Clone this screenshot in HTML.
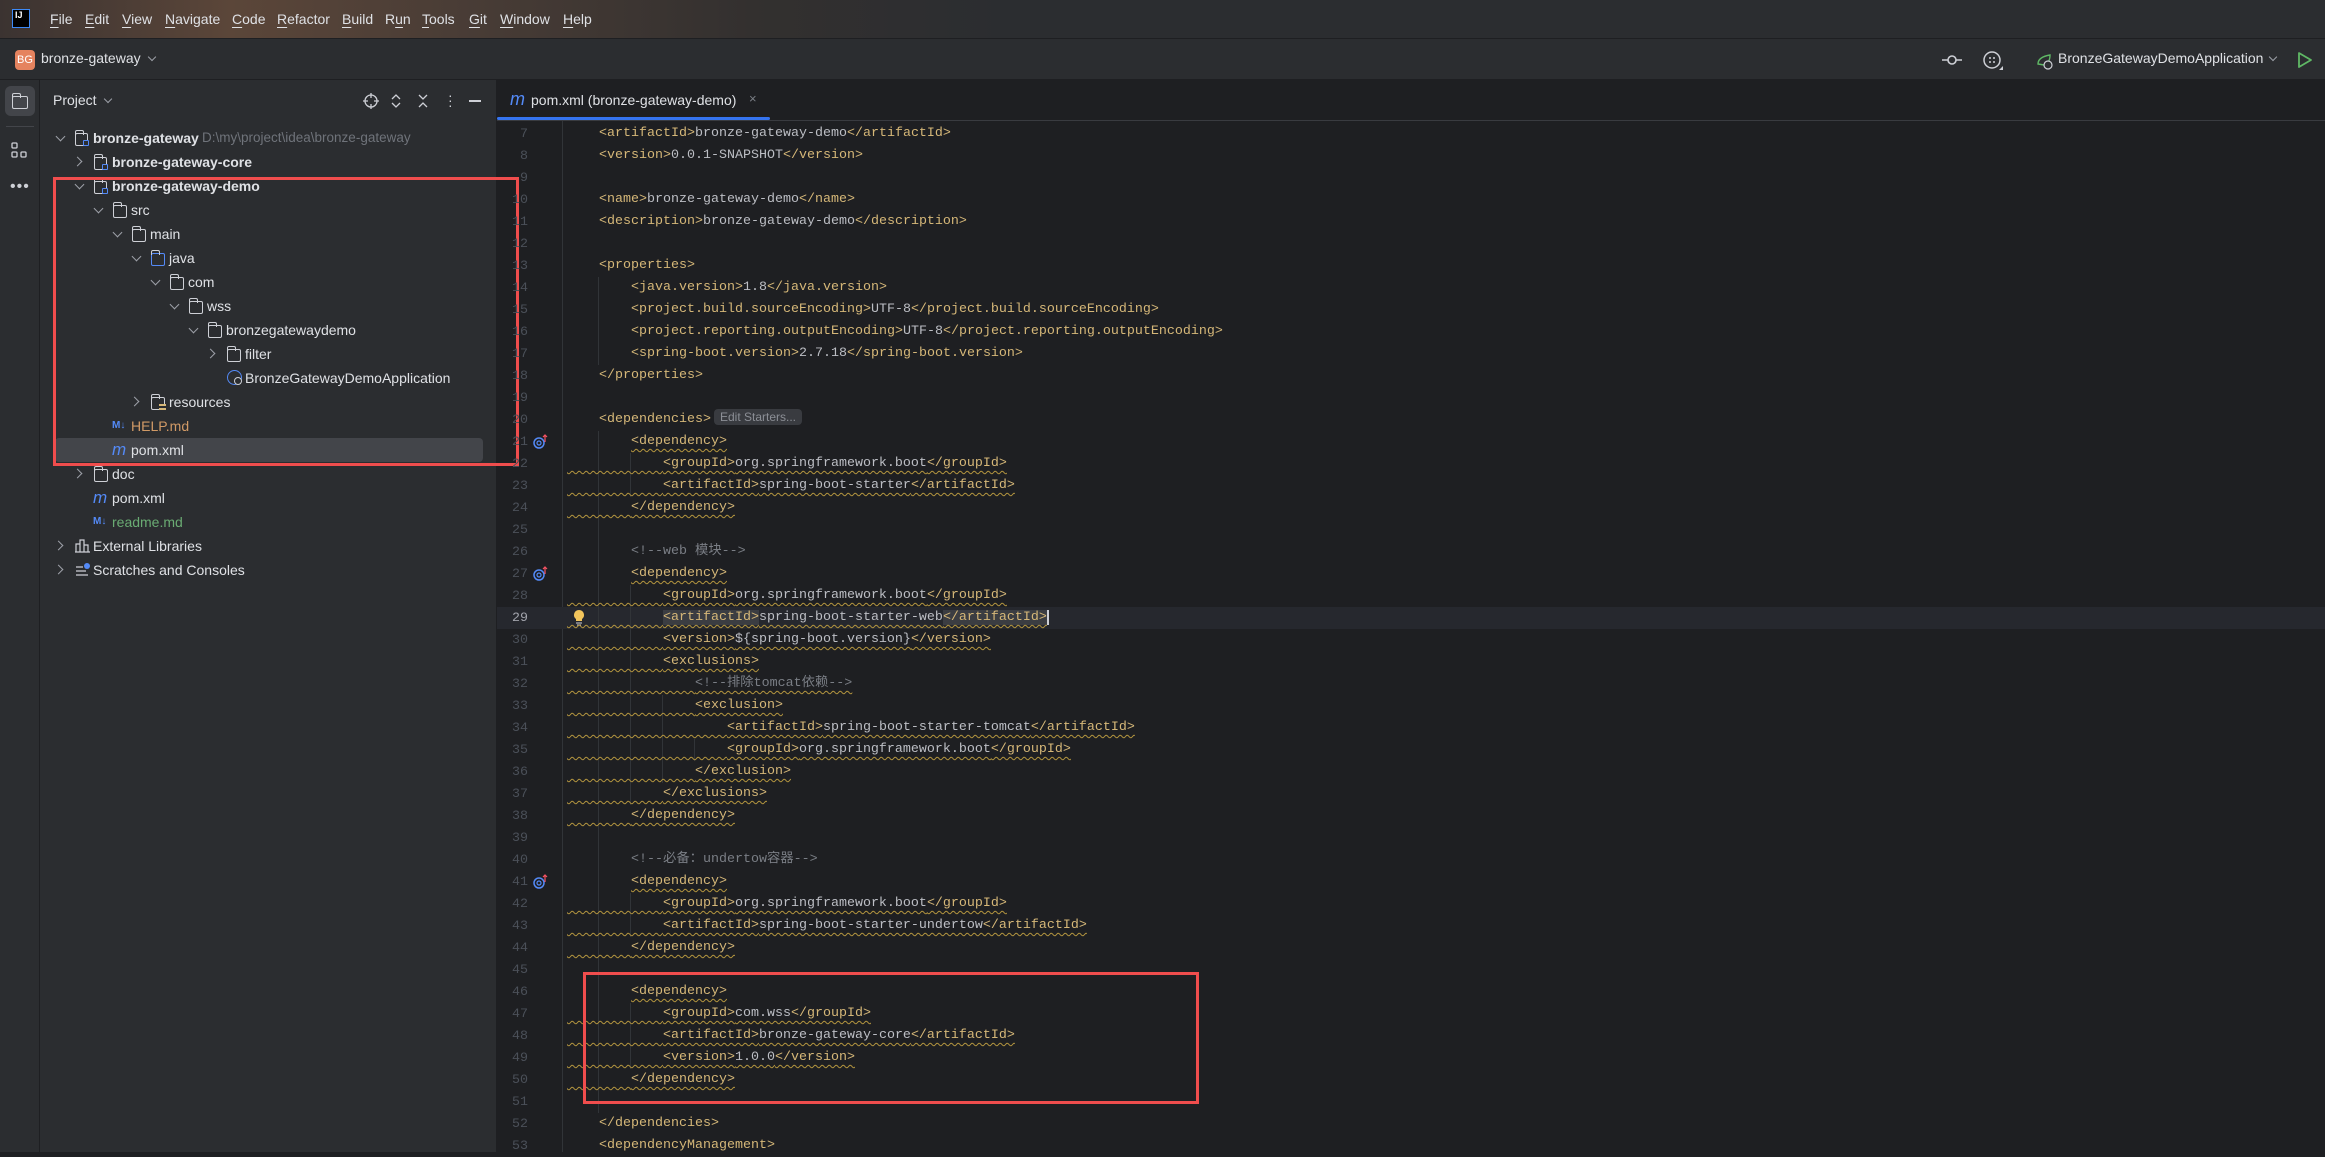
<!DOCTYPE html>
<html><head><meta charset="utf-8">
<style>
*{margin:0;padding:0;box-sizing:border-box}
body{width:2325px;height:1152px;overflow:hidden;background:#1e1f22;font-family:"Liberation Sans","Noto Sans CJK SC",sans-serif;color:#dfe1e5;position:relative}
.abs{position:absolute}
#menu{left:0;top:0;width:2325px;height:39px;background:linear-gradient(90deg,#3b3331 0,#5b4639 230px,#4a3d36 450px,#33302f 750px,#2b2d30 1000px);border-bottom:1px solid #1e1f22}
#menu span{position:absolute;top:11px;font-size:14px;color:#dfe1e5}
#menu u{text-decoration-thickness:1px;text-underline-offset:3px}
#tool{left:0;top:39px;width:2325px;height:41px;background:#2b2d30;border-bottom:1px solid #1e1f22}
#strip{left:0;top:80px;width:40px;height:1072px;background:#2b2d30;border-right:1px solid #1e1f22}
#proj{left:40px;top:80px;width:457px;height:1072px;background:#2b2d30;border-right:1px solid #1e1f22}
.row{position:absolute;height:24px;line-height:24px;font-size:14px;white-space:nowrap}
.chev{position:absolute;width:7px;height:7px;border-right:1.5px solid #9da0a8;border-bottom:1.5px solid #9da0a8}
.down{transform:rotate(45deg)}
.right{transform:rotate(-45deg)}
.fold{position:absolute;width:16px;height:13px;border:1.3px solid #ced0d6;border-radius:2px}
.fold:before{content:"";position:absolute;left:-1.3px;top:-4px;width:7px;height:4px;border:1.3px solid #ced0d6;border-bottom:none;border-radius:2px 2px 0 0}
#tabs{left:497px;top:80px;width:1828px;height:41px;background:#1e1f22;border-bottom:1px solid #393b40}
.ln{position:absolute;left:490px;width:38px;text-align:right;font-family:"Liberation Mono",monospace;font-size:13.3px;color:#4b5059;height:22px;line-height:22px;margin-top:2px}
.cl{position:absolute;left:567px;height:22px;line-height:22px;font-family:"Liberation Mono","Noto Sans CJK SC",monospace;font-size:13.33px;color:#bcbec4;white-space:pre;margin-top:2px}
.t{color:#d5b778}
.c{color:#7a7e85}
.w{text-decoration:underline wavy #b5963f;text-decoration-thickness:1px;text-underline-offset:4px}
.g{position:absolute;width:1px;background:#313438}
.red{position:absolute;border:3px solid #f04d4d}
</style></head><body>

<div id="menu" class="abs">
 <div class="abs" style="left:12px;top:9px;width:18px;height:19px;background:#000;border:1.5px solid #3d8af7;color:#fff;font-size:9px;font-weight:bold;line-height:11px;padding-left:2px">IJ</div>
 <span style="left:50px"><u>F</u>ile</span><span style="left:85px"><u>E</u>dit</span><span style="left:122px"><u>V</u>iew</span><span style="left:165px"><u>N</u>avigate</span><span style="left:232px"><u>C</u>ode</span><span style="left:277px"><u>R</u>efactor</span><span style="left:342px"><u>B</u>uild</span><span style="left:385px">R<u>u</u>n</span><span style="left:422px"><u>T</u>ools</span><span style="left:469px"><u>G</u>it</span><span style="left:500px"><u>W</u>indow</span><span style="left:563px"><u>H</u>elp</span>
</div>

<div id="tool" class="abs">
 <div class="abs" style="left:15px;top:11px;width:20px;height:20px;background:#e5835f;border-radius:4px;color:#fff;font-size:11px;line-height:20px;text-align:center">BG</div>
 <div class="abs" style="left:41px;top:11px;font-size:14px;color:#dfe1e5">bronze-gateway</div>
 <div class="abs" style="left:149px;top:15px;width:6px;height:6px;border-right:1.3px solid #9da0a8;border-bottom:1.3px solid #9da0a8;transform:rotate(45deg)"></div>
 <svg class="abs" style="left:1940px;top:12px" width="24" height="18"><line x1="2" y1="9" x2="22" y2="9" stroke="#ced0d6" stroke-width="1.6"/><circle cx="12" cy="9" r="4" fill="#2b2d30" stroke="#ced0d6" stroke-width="1.6"/></svg>
 <svg class="abs" style="left:1982px;top:11px" width="22" height="22"><circle cx="10" cy="10" r="8" fill="none" stroke="#ced0d6" stroke-width="1.5"/><circle cx="8" cy="8" r="1" fill="#ced0d6"/><circle cx="12" cy="8" r="1" fill="#ced0d6"/><circle cx="8" cy="12" r="1" fill="#ced0d6"/><circle cx="12" cy="12" r="1" fill="#ced0d6"/><path d="M17 20 L21 20 L21 16Z" fill="#ced0d6"/></svg>
 <svg class="abs" style="left:2036px;top:13px" width="18" height="18"><path d="M2 12 C2 6 8 4 14 3 C14 8 12 12 8 13 Z" fill="none" stroke="#5fb865" stroke-width="1.4"/><circle cx="12" cy="13" r="4" fill="#2b2d30" stroke="#ced0d6" stroke-width="1.2"/></svg>
 <div class="abs" style="left:2058px;top:11px;font-size:14px;color:#dfe1e5">BronzeGatewayDemoApplication</div>
 <div class="abs" style="left:2270px;top:15px;width:6px;height:6px;border-right:1.3px solid #9da0a8;border-bottom:1.3px solid #9da0a8;transform:rotate(45deg)"></div>
 <svg class="abs" style="left:2297px;top:12px" width="16" height="18"><path d="M2 2 L14 9 L2 16Z" fill="none" stroke="#5fb865" stroke-width="1.8" stroke-linejoin="round"/></svg>
</div>

<div id="strip" class="abs">
 <div class="abs" style="left:5px;top:6px;width:30px;height:30px;background:#43454a;border-radius:6px"></div>
 <div class="fold" style="left:12px;top:16px;width:16px;height:13px"></div>
 <div class="abs" style="left:6px;top:46px;width:28px;height:1px;background:#43454a"></div>
 <svg class="abs" style="left:11px;top:62px" width="18" height="18"><rect x="1" y="1" width="5" height="5" rx="1" fill="none" stroke="#ced0d6" stroke-width="1.3"/><rect x="1" y="10" width="5" height="5" rx="1" fill="none" stroke="#ced0d6" stroke-width="1.3"/><rect x="10" y="10" width="5" height="5" rx="1" fill="none" stroke="#ced0d6" stroke-width="1.3"/></svg>
 <div class="abs" style="left:10px;top:98px;font-size:16px;color:#ced0d6;letter-spacing:1px">•••</div>
</div>

<div id="proj" class="abs">
 <div class="abs" style="left:13px;top:12px;font-size:14px;color:#dfe1e5">Project</div>
 <div class="abs" style="left:65px;top:16px;width:6px;height:6px;border-right:1.3px solid #9da0a8;border-bottom:1.3px solid #9da0a8;transform:rotate(45deg)"></div>
 <svg class="abs" style="left:323px;top:13px" width="16" height="16"><circle cx="8" cy="8" r="6" fill="none" stroke="#ced0d6" stroke-width="1.3"/><path d="M8 0v5M8 11v5M0 8h5M11 8h5" stroke="#ced0d6" stroke-width="1.3"/></svg>
 <svg class="abs" style="left:350px;top:13px" width="12" height="16"><path d="M2 6 L6 2 L10 6 M2 10 L6 14 L10 10" fill="none" stroke="#ced0d6" stroke-width="1.3"/></svg>
 <svg class="abs" style="left:377px;top:13px" width="12" height="16"><path d="M2 2 L6 6 L10 2 M2 14 L6 10 L10 14" fill="none" stroke="#ced0d6" stroke-width="1.3"/></svg>
 <div class="abs" style="left:408px;top:13px;font-size:14px;color:#ced0d6;line-height:5px;width:4px">·<br>·<br>·</div>
 <div class="abs" style="left:429px;top:20px;width:12px;height:1.5px;background:#ced0d6"></div>
</div>

<div class="abs" style="left:55px;top:438px;width:428px;height:24px;background:#43454a;border-radius:4px"></div>

<div class="row" style="left:0;top:126px"><div class="chev down" style="left:57px;top:7px"></div><div class="fold" style="left:75px;top:7px;width:13px"></div><div class="abs" style="left:83px;top:14px;width:6px;height:6px;border:1.3px solid #548af7;background:#2b2d30;border-radius:1px"></div><span class="abs" style="left:93px;font-weight:bold">bronze-gateway</span><span class="abs" style="left:202px;color:#6f737a;font-size:13.5px">D:\my\project\idea\bronze-gateway</span></div>
<div class="row" style="left:0;top:150px"><div class="chev right" style="left:74px;top:8px"></div><div class="fold" style="left:94px;top:7px;width:13px"></div><div class="abs" style="left:102px;top:14px;width:6px;height:6px;border:1.3px solid #548af7;background:#2b2d30;border-radius:1px"></div><span class="abs" style="left:112px;font-weight:bold">bronze-gateway-core</span></div>
<div class="row" style="left:0;top:174px"><div class="chev down" style="left:76px;top:7px"></div><div class="fold" style="left:94px;top:7px;width:13px"></div><div class="abs" style="left:102px;top:14px;width:6px;height:6px;border:1.3px solid #548af7;background:#2b2d30;border-radius:1px"></div><span class="abs" style="left:112px;font-weight:bold">bronze-gateway-demo</span></div>
<div class="row" style="left:0;top:198px"><div class="chev down" style="left:95px;top:7px"></div><div class="fold" style="left:113px;top:7px;width:14px"></div><span class="abs" style="left:131px">src</span></div>
<div class="row" style="left:0;top:222px"><div class="chev down" style="left:114px;top:7px"></div><div class="fold" style="left:132px;top:7px;width:14px"></div><span class="abs" style="left:150px">main</span></div>
<div class="row" style="left:0;top:246px"><div class="chev down" style="left:133px;top:7px"></div><div class="fold" style="left:151px;top:7px;width:14px;border-color:#548af7"></div><span class="abs" style="left:169px">java</span></div>
<div class="row" style="left:0;top:270px"><div class="chev down" style="left:152px;top:7px"></div><div class="fold" style="left:170px;top:7px;width:14px"></div><span class="abs" style="left:188px">com</span></div>
<div class="row" style="left:0;top:294px"><div class="chev down" style="left:171px;top:7px"></div><div class="fold" style="left:189px;top:7px;width:14px"></div><span class="abs" style="left:207px">wss</span></div>
<div class="row" style="left:0;top:318px"><div class="chev down" style="left:190px;top:7px"></div><div class="fold" style="left:208px;top:7px;width:14px"></div><span class="abs" style="left:226px">bronzegatewaydemo</span></div>
<div class="row" style="left:0;top:342px"><div class="chev right" style="left:207px;top:8px"></div><div class="fold" style="left:227px;top:7px;width:14px"></div><span class="abs" style="left:245px">filter</span></div>
<div class="row" style="left:0;top:366px"><div class="abs" style="left:227px;top:4px;width:15px;height:15px;border:1.5px solid #548af7;border-radius:50%"></div><div class="abs" style="left:234px;top:11px;width:8px;height:8px;border:1.2px solid #ced0d6;border-radius:50%;background:#2b2d30"></div><span class="abs" style="left:245px">BronzeGatewayDemoApplication</span></div>
<div class="row" style="left:0;top:390px"><div class="chev right" style="left:131px;top:8px"></div><div class="fold" style="left:151px;top:7px;width:14px"></div><div class="abs" style="left:159px;top:14px;width:7px;height:6px;border-top:2px solid #d5b778;border-bottom:2px solid #d5b778;background:#2b2d30"></div><span class="abs" style="left:169px">resources</span></div>
<div class="row" style="left:0;top:414px"><span class="abs" style="left:112px;font-size:10px;font-weight:bold;color:#548af7">M↓</span><span class="abs" style="left:131px;color:#d19a66">HELP.md</span></div>
<div class="row" style="left:0;top:438px"><span class="abs" style="left:112px;font-style:italic;color:#548af7;font-size:17px">m</span><span class="abs" style="left:131px">pom.xml</span></div>
<div class="row" style="left:0;top:462px"><div class="chev right" style="left:74px;top:8px"></div><div class="fold" style="left:94px;top:7px;width:14px"></div><span class="abs" style="left:112px">doc</span></div>
<div class="row" style="left:0;top:486px"><span class="abs" style="left:93px;font-style:italic;color:#548af7;font-size:17px">m</span><span class="abs" style="left:112px">pom.xml</span></div>
<div class="row" style="left:0;top:510px"><span class="abs" style="left:93px;font-size:10px;font-weight:bold;color:#548af7">M↓</span><span class="abs" style="left:112px;color:#6aab73">readme.md</span></div>
<div class="row" style="left:0;top:534px"><div class="chev right" style="left:55px;top:8px"></div><svg class="abs" style="left:75px;top:5px" width="15" height="14"><path d="M1 13V5h4v8M5 13V1h4v12M9 13V6h4v7M0 13h15" fill="none" stroke="#ced0d6" stroke-width="1.2"/></svg><span class="abs" style="left:93px">External Libraries</span></div>
<div class="row" style="left:0;top:558px"><div class="chev right" style="left:55px;top:8px"></div><svg class="abs" style="left:75px;top:5px" width="15" height="14"><path d="M1 4h7M1 8h10M1 12h12" stroke="#ced0d6" stroke-width="1.2"/><circle cx="12" cy="3" r="3" fill="#548af7"/></svg><span class="abs" style="left:93px">Scratches and Consoles</span></div>

<div class="red" style="left:53px;top:177px;width:466px;height:289px"></div>

<div id="tabs" class="abs">
 <span class="abs" style="left:13px;top:9px;font-style:italic;color:#548af7;font-size:18px">m</span>
 <span class="abs" style="left:34px;top:12px;font-size:14px;color:#dfe1e5">pom.xml (bronze-gateway-demo)</span>
 <span class="abs" style="left:252px;top:11px;font-size:13px;color:#7a7e85">×</span>
 <div class="abs" style="left:0;top:37px;width:273px;height:3px;background:#3574f0;border-radius:2px"></div>
</div>

<div class="abs" style="left:562px;top:121px;width:1px;height:1031px;background:#313438"></div>
<div class="abs" style="left:497px;top:607px;width:1828px;height:22px;background:#26282e"></div>

<div class="g" style="left:598px;top:277px;height:88px"></div>
<div class="g" style="left:598px;top:431px;height:682px"></div>
<div class="g" style="left:630px;top:453px;height:44px"></div>
<div class="g" style="left:630px;top:585px;height:220px"></div>
<div class="g" style="left:662px;top:695px;height:88px"></div>
<div class="g" style="left:694px;top:739px;height:22px"></div>
<div class="g" style="left:630px;top:893px;height:44px"></div>
<div class="g" style="left:630px;top:1003px;height:66px"></div>

<div class="ln" style="top:121px">7</div><div class="ln" style="top:143px">8</div><div class="ln" style="top:165px">9</div><div class="ln" style="top:187px">10</div><div class="ln" style="top:209px">11</div><div class="ln" style="top:231px">12</div><div class="ln" style="top:253px">13</div><div class="ln" style="top:275px">14</div><div class="ln" style="top:297px">15</div><div class="ln" style="top:319px">16</div><div class="ln" style="top:341px">17</div><div class="ln" style="top:363px">18</div><div class="ln" style="top:385px">19</div><div class="ln" style="top:407px">20</div><div class="ln" style="top:429px">21</div><div class="ln" style="top:451px">22</div><div class="ln" style="top:473px">23</div><div class="ln" style="top:495px">24</div><div class="ln" style="top:517px">25</div><div class="ln" style="top:539px">26</div><div class="ln" style="top:561px">27</div><div class="ln" style="top:583px">28</div><div class="ln" style="top:605px;color:#a1a3ab">29</div><div class="ln" style="top:627px">30</div><div class="ln" style="top:649px">31</div><div class="ln" style="top:671px">32</div><div class="ln" style="top:693px">33</div><div class="ln" style="top:715px">34</div><div class="ln" style="top:737px">35</div><div class="ln" style="top:759px">36</div><div class="ln" style="top:781px">37</div><div class="ln" style="top:803px">38</div><div class="ln" style="top:825px">39</div><div class="ln" style="top:847px">40</div><div class="ln" style="top:869px">41</div><div class="ln" style="top:891px">42</div><div class="ln" style="top:913px">43</div><div class="ln" style="top:935px">44</div><div class="ln" style="top:957px">45</div><div class="ln" style="top:979px">46</div><div class="ln" style="top:1001px">47</div><div class="ln" style="top:1023px">48</div><div class="ln" style="top:1045px">49</div><div class="ln" style="top:1067px">50</div><div class="ln" style="top:1089px">51</div><div class="ln" style="top:1111px">52</div><div class="ln" style="top:1133px">53</div>

<svg class="abs" style="left:533px;top:434px" width="16" height="16"><circle cx="6" cy="9" r="5" fill="none" stroke="#548af7" stroke-width="1.5"/><circle cx="6" cy="9" r="2" fill="none" stroke="#548af7" stroke-width="1.2"/><path d="M12 8V1M10 3l2-2 2 2" fill="none" stroke="#f75464" stroke-width="1.2"/></svg>
<svg class="abs" style="left:533px;top:566px" width="16" height="16"><circle cx="6" cy="9" r="5" fill="none" stroke="#548af7" stroke-width="1.5"/><circle cx="6" cy="9" r="2" fill="none" stroke="#548af7" stroke-width="1.2"/><path d="M12 8V1M10 3l2-2 2 2" fill="none" stroke="#f75464" stroke-width="1.2"/></svg>
<svg class="abs" style="left:533px;top:874px" width="16" height="16"><circle cx="6" cy="9" r="5" fill="none" stroke="#548af7" stroke-width="1.5"/><circle cx="6" cy="9" r="2" fill="none" stroke="#548af7" stroke-width="1.2"/><path d="M12 8V1M10 3l2-2 2 2" fill="none" stroke="#f75464" stroke-width="1.2"/></svg>
<svg class="abs" style="left:573px;top:609px" width="12" height="18"><path d="M6 1a5 5 0 0 0-3 9v2h6v-2a5 5 0 0 0-3-9z" fill="#f2c55c"/><path d="M3 14h6M4 16h4" stroke="#ced0d6" stroke-width="1"/></svg>

<div class="cl" style="top:121px">    <span class="t">&lt;artifactId&gt;</span>bronze-gateway-demo<span class="t">&lt;/artifactId&gt;</span></div>
<div class="cl" style="top:143px">    <span class="t">&lt;version&gt;</span>0.0.1-SNAPSHOT<span class="t">&lt;/version&gt;</span></div>
<div class="cl" style="top:187px">    <span class="t">&lt;name&gt;</span>bronze-gateway-demo<span class="t">&lt;/name&gt;</span></div>
<div class="cl" style="top:209px">    <span class="t">&lt;description&gt;</span>bronze-gateway-demo<span class="t">&lt;/description&gt;</span></div>
<div class="cl" style="top:253px">    <span class="t">&lt;properties&gt;</span></div>
<div class="cl" style="top:275px">        <span class="t">&lt;java.version&gt;</span>1.8<span class="t">&lt;/java.version&gt;</span></div>
<div class="cl" style="top:297px">        <span class="t">&lt;project.build.sourceEncoding&gt;</span>UTF-8<span class="t">&lt;/project.build.sourceEncoding&gt;</span></div>
<div class="cl" style="top:319px">        <span class="t">&lt;project.reporting.outputEncoding&gt;</span>UTF-8<span class="t">&lt;/project.reporting.outputEncoding&gt;</span></div>
<div class="cl" style="top:341px">        <span class="t">&lt;spring-boot.version&gt;</span>2.7.18<span class="t">&lt;/spring-boot.version&gt;</span></div>
<div class="cl" style="top:363px">    <span class="t">&lt;/properties&gt;</span></div>
<div class="cl" style="top:407px">    <span class="t">&lt;dependencies&gt;</span><span style="display:inline-block;margin-left:3px;padding:0 6px;height:16px;line-height:16px;background:#393b40;border-radius:4px;font-family:'Liberation Sans',sans-serif;font-size:12px;color:#8c8f96;vertical-align:1px">Edit Starters...</span></div>
<div class="cl" style="top:429px">        <span class="w"><span class="t">&lt;dependency&gt;</span></span></div>
<div class="cl" style="top:451px"><span class="w">            <span class="t">&lt;groupId&gt;</span>org.springframework.boot<span class="t">&lt;/groupId&gt;</span></span></div>
<div class="cl" style="top:473px"><span class="w">            <span class="t">&lt;artifactId&gt;</span>spring-boot-starter<span class="t">&lt;/artifactId&gt;</span></span></div>
<div class="cl" style="top:495px"><span class="w">        <span class="t">&lt;/dependency&gt;</span></span></div>
<div class="cl" style="top:539px">        <span class="c">&lt;!--web 模块--&gt;</span></div>
<div class="cl" style="top:561px">        <span class="w"><span class="t">&lt;dependency&gt;</span></span></div>
<div class="cl" style="top:583px"><span class="w">            <span class="t">&lt;groupId&gt;</span>org.springframework.boot<span class="t">&lt;/groupId&gt;</span></span></div>
<div class="cl" style="top:605px"><span class="w">            <span class="t" style="background:#3b3d42">&lt;artifactId&gt;</span>spring-boot-starter-web<span class="t" style="background:#3b3d42">&lt;/artifactId&gt;</span></span><span style="border-left:2px solid #ced0d6"></span></div>
<div class="cl" style="top:627px"><span class="w">            <span class="t">&lt;version&gt;</span>${spring-boot.version}<span class="t">&lt;/version&gt;</span></span></div>
<div class="cl" style="top:649px"><span class="w">            <span class="t">&lt;exclusions&gt;</span></span></div>
<div class="cl" style="top:671px"><span class="w">                <span class="c">&lt;!--排除tomcat依赖--&gt;</span></span></div>
<div class="cl" style="top:693px"><span class="w">                <span class="t">&lt;exclusion&gt;</span></span></div>
<div class="cl" style="top:715px"><span class="w">                    <span class="t">&lt;artifactId&gt;</span>spring-boot-starter-tomcat<span class="t">&lt;/artifactId&gt;</span></span></div>
<div class="cl" style="top:737px"><span class="w">                    <span class="t">&lt;groupId&gt;</span>org.springframework.boot<span class="t">&lt;/groupId&gt;</span></span></div>
<div class="cl" style="top:759px"><span class="w">                <span class="t">&lt;/exclusion&gt;</span></span></div>
<div class="cl" style="top:781px"><span class="w">            <span class="t">&lt;/exclusions&gt;</span></span></div>
<div class="cl" style="top:803px"><span class="w">        <span class="t">&lt;/dependency&gt;</span></span></div>
<div class="cl" style="top:847px">        <span class="c">&lt;!--必备：undertow容器--&gt;</span></div>
<div class="cl" style="top:869px">        <span class="w"><span class="t">&lt;dependency&gt;</span></span></div>
<div class="cl" style="top:891px"><span class="w">            <span class="t">&lt;groupId&gt;</span>org.springframework.boot<span class="t">&lt;/groupId&gt;</span></span></div>
<div class="cl" style="top:913px"><span class="w">            <span class="t">&lt;artifactId&gt;</span>spring-boot-starter-undertow<span class="t">&lt;/artifactId&gt;</span></span></div>
<div class="cl" style="top:935px"><span class="w">        <span class="t">&lt;/dependency&gt;</span></span></div>
<div class="cl" style="top:979px">        <span class="w"><span class="t">&lt;dependency&gt;</span></span></div>
<div class="cl" style="top:1001px"><span class="w">            <span class="t">&lt;groupId&gt;</span>com.wss<span class="t">&lt;/groupId&gt;</span></span></div>
<div class="cl" style="top:1023px"><span class="w">            <span class="t">&lt;artifactId&gt;</span>bronze-gateway-core<span class="t">&lt;/artifactId&gt;</span></span></div>
<div class="cl" style="top:1045px"><span class="w">            <span class="t">&lt;version&gt;</span>1.0.0<span class="t">&lt;/version&gt;</span></span></div>
<div class="cl" style="top:1067px"><span class="w">        <span class="t">&lt;/dependency&gt;</span></span></div>
<div class="cl" style="top:1111px">    <span class="t">&lt;/dependencies&gt;</span></div>
<div class="cl" style="top:1133px">    <span class="t">&lt;dependencyManagement&gt;</span></div>

<div class="red" style="left:583px;top:972px;width:616px;height:132px"></div>

</body></html>
